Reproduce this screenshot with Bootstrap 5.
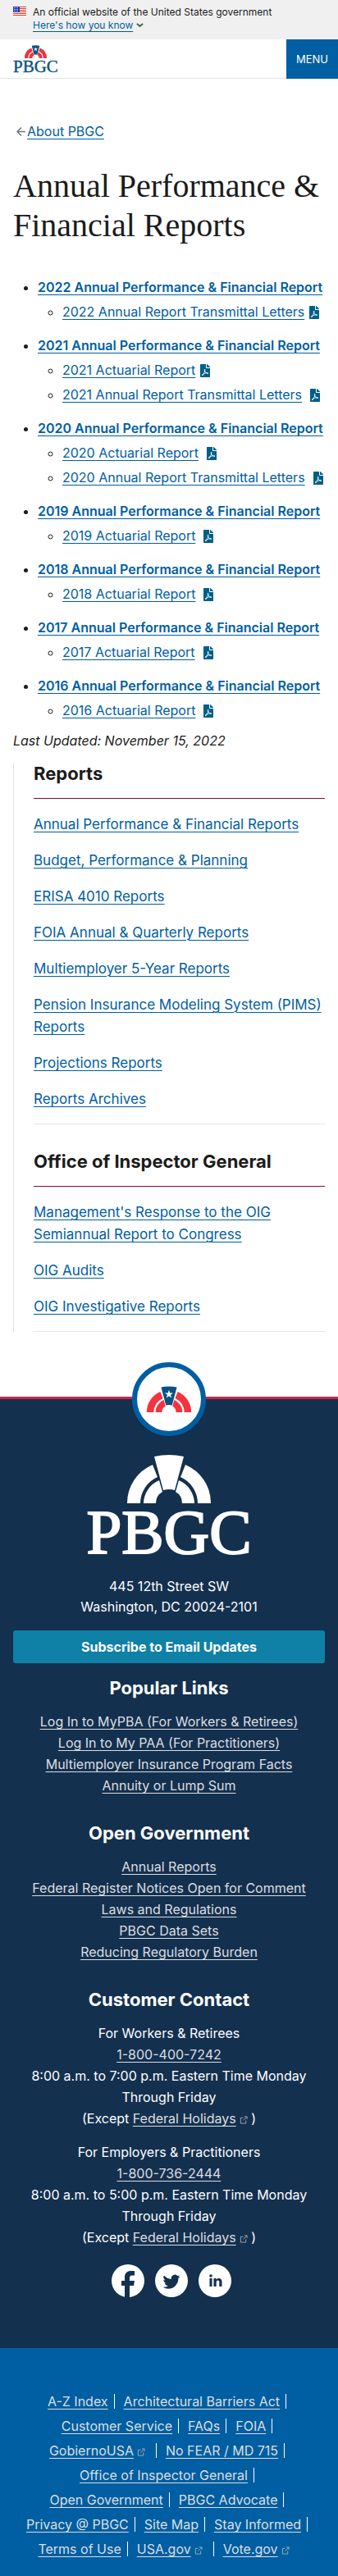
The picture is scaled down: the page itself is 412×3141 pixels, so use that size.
<!DOCTYPE html>
<html lang="en">
<head>
<meta charset="utf-8">
<meta name="viewport" content="width=device-width, initial-scale=1">
<title>Annual Performance &amp; Financial Reports | PBGC</title>
<link href="https://cdn.jsdelivr.net/npm/bootstrap@5.3.0/dist/css/bootstrap.min.css" rel="stylesheet">
<style>
:root{--blue:#005ea2;--navy:#14304f;--ink:#1b1b1b}
body{font-family:Inter,"Liberation Sans",sans-serif;font-size:16px;line-height:25px;color:var(--ink)}
a{color:var(--blue);text-underline-offset:3px;text-decoration-thickness:1px}
.gov-banner{background:#f0f0f0;font-size:12px;line-height:16px;padding:7px 16px 9px}
.gov-banner .btn{font-size:12px;line-height:16px;color:var(--blue);text-underline-offset:3px}
.flag{margin-top:1px}
.site-header{height:48px;border-bottom:1px solid #dfe1e2}
.menu-btn{background:var(--blue);color:#fff;height:48px;width:63px;font-size:13px}
.back{padding-top:52px}
h1{font-family:"Liberation Serif",serif;font-size:40px;line-height:48px;font-weight:400;margin:30px 0 39px}
.reports{padding-left:30px;margin-bottom:12px}
.reports li{margin-bottom:5px}
.reports > li > a{font-weight:600}
.reports ul{padding-left:30px;margin:5px 0 16px}
.reports > li:last-child,.reports > li:last-child ul{margin-bottom:0}
.reports > li:last-child li{margin-bottom:0}
.pdf{width:12px;height:16px;fill:#005f87;margin-left:6px;vertical-align:-3px}
.pdf-far{margin-left:10px}
.updated{margin-bottom:14px}
.side{border-left:1px solid #dfe1e2;padding-left:24px}
.side h2{font-size:22px;line-height:27px;font-weight:700;margin:0;padding-bottom:16px;border-bottom:1px solid #8b0a2f}
.side ul{padding:9px 0 8px;border-bottom:1px solid #e6e7e8;font-size:17px;line-height:27px}
.side li{padding:9px 0 8px}
.side section + section{padding-top:32px}
.seal-row{padding-top:37px}
.seal{width:90px;height:90px;border:6px solid var(--blue);background:#fff;margin:0 auto -48px;position:relative;z-index:1}
.foot{background:var(--navy);border-top:3px solid #c7254e;color:#fff;line-height:26px;padding:66px 16px 62px}
.foot a,.legal a{color:#dcdee0}
.foot h2{font-size:22px;line-height:28px;font-weight:700;margin:0 0 14px}
.foot .links{margin-bottom:31px}
.foot p{margin-bottom:15px}
.foot address{line-height:25px;margin-bottom:16px}
.foot-logo{overflow:visible;margin-bottom:24px}
.subscribe{background:#0f80a6;color:#fff;font-weight:700;height:40px;border-radius:3px;margin-bottom:16px}
.social{gap:13px;padding:5px 0 0 6px}
.social a{width:40px;height:40px}
.social svg{display:block}
.ext{width:10px;height:10px;fill:none;stroke:#a9aeb1;stroke-width:1;margin-left:4px;vertical-align:-1px}
.legal{background:var(--blue);padding:50px 24px 20px}
.legal li{margin:3px 8px 3px 0;padding:0 8px 0 3px;height:24px;line-height:24px}
.legal li:not(:last-child){background:linear-gradient(#fff,#fff) right 3px/1px 18px no-repeat}
.legal .outside{padding-right:14px}
</style>
</head>
<body>
<svg width="0" height="0" class="position-absolute" aria-hidden="true">
  <symbol id="arcs" viewBox="-52 -60 104 60">
    <path d="M-51 0A51 51 0 0 1-20-47L-14-32A35 35 0 0 0-35 0ZM-31 0A31 31 0 0 1-12-28L-8-14A16 16 0 0 0-16 0ZM51 0A51 51 0 0 0 20-47L14-32A35 35 0 0 1 35 0ZM31 0A31 31 0 0 0 12-28L8-14A16 16 0 0 1 16 0Z"/>
  </symbol>
  <symbol id="keystone" viewBox="-52 -60 104 60"><path d="M-18-57Q0-61 18-57L7-16Q0-18-7-16Z"/></symbol>
  <symbol id="star" viewBox="-52 -60 104 60"><path d="M0-51L2.300-44.200H9.500L3.700-40L5.900-33L0-37.200L-5.900-33L-3.700-40L-9.500-44.200H-2.300Z"/></symbol>
  <symbol id="pdf" viewBox="0 0 384 512"><path d="M181.900 256.100c-5-16-4.900-46.900-2-46.900 8.400 0 7.600 36.900 2 46.900zm-1.700 47.200c-7.700 20.200-17.300 43.300-28.400 62.700 18.300-7 39-17.200 62.900-21.900-12.700-9.600-24.900-23.400-34.500-40.800zM86.100 428.100c0 .8 13.200-5.400 34.900-40.200-6.700 6.300-29.100 24.500-34.900 40.200zM248 160h136v328c0 13.300-10.700 24-24 24H24c-13.300 0-24-10.700-24-24V24C0 10.700 10.700 0 24 0h200v136c0 13.200 10.800 24 24 24zm-8 171.800c-20-12.200-33.300-29-42.700-53.800 4.500-18.500 11.600-46.600 6.200-64.200-4.700-29.400-42.400-26.500-47.800-6.800-5 18.300-.4 44.100 8.100 77-11.600 27.600-28.700 64.600-40.800 85.800-.1 0-.1.1-.2.1-27.100 13.900-73.600 44.500-54.500 68 5.600 6.900 16 10 21.500 10 17.900 0 35.700-18 61.100-61.800 25.800-8.500 54.100-19.100 79-23.200 21.700 11.800 47.100 19.500 64 19.500 29.200 0 31.200-32 19.700-43.400-13.900-13.600-54.300-9.700-73.600-7.200zM377 105L279 7c-4.500-4.500-10.600-7-17-7h-6v128h128v-6.100c0-6.300-2.500-12.400-7-16.900zm-74.100 255.300c4.100-2.700-2.500-11.900-42.800-9 37.100 15.800 42.800 9 42.800 9z"/></symbol>
  <symbol id="ext" viewBox="0 0 11 11"><path d="M5 2.500H1.500V10H8.500V6M6.500 1H10V4.500M10 1L5 6"/></symbol>
</svg>

<div class="gov-banner d-flex">
  <svg class="flag me-2 flex-shrink-0" width="16" height="11" viewBox="0 0 16 11" aria-hidden="true"><path fill="#fff" d="M0 0h16v11H0z"/><path stroke="#db3e1f" d="M0 .5h16M0 2.500h16M0 4.500h16M0 6.500h16M0 8.500h16M0 10.500h16"/><path fill="#1e33b1" d="M0 0h8v7H0z"/><path stroke="#fff" stroke-dasharray="1 1" d="M1 1.500h6M1 3.500h6M1 5.500h6"/></svg>
  <div>
    <div>An official website of the United States government</div>
    <button type="button" class="btn p-0 border-0 d-flex align-items-center"><span class="text-decoration-underline">Here's how you know</span><svg class="ms-1" width="9" height="6" viewBox="0 0 9 6" fill="none" stroke="#356a52" stroke-width="2" aria-hidden="true"><path d="M1 1L4.500 4L8 1"/></svg></button>
  </div>
</div>
<header class="site-header d-flex justify-content-between">
  <a href="#" class="ms-3 mt-1" aria-label="PBGC home">
    <svg width="56" height="40" viewBox="0 0 56 40"><use href="#arcs" x="13" y="3" width="29" height="16" fill="#f0323c"/><use href="#keystone" x="13" y="3" width="29" height="16" fill="#0b5283"/><use href="#star" x="13" y="3" width="29" height="16" fill="#fff"/><text x="0" y="36" font-family="Liberation Serif" font-size="21" fill="#0b5283" stroke="#0b5283" stroke-width=".4">PBGC</text></svg>
  </a>
  <button type="button" class="menu-btn border-0">MENU</button>
</header>

<main class="px-3">
  <nav class="back d-flex align-items-center"><svg class="ms-1" width="13" height="11" viewBox="0 0 13 11" fill="none" stroke="#71767a" stroke-width="1.500" aria-hidden="true"><path d="M11 5.500H1M6 .5L1 5.500L6 10.500"/></svg><a href="#">About PBGC</a></nav>
  <h1>Annual Performance &amp; Financial Reports</h1>
  <ul class="reports">
    <li><a href="#">2022 Annual Performance &amp; Financial Report</a><ul><li><a href="#">2022 Annual Report Transmittal Letters</a><svg class="pdf"><use href="#pdf"/></svg></li></ul></li>
    <li><a href="#">2021 Annual Performance &amp; Financial Report</a><ul><li><a href="#">2021 Actuarial Report</a><svg class="pdf"><use href="#pdf"/></svg></li><li><a href="#">2021 Annual Report Transmittal Letters</a><svg class="pdf pdf-far"><use href="#pdf"/></svg></li></ul></li>
    <li><a href="#">2020 Annual Performance &amp; Financial Report</a><ul><li><a href="#">2020 Actuarial Report</a><svg class="pdf pdf-far"><use href="#pdf"/></svg></li><li><a href="#">2020 Annual Report Transmittal Letters</a><svg class="pdf pdf-far"><use href="#pdf"/></svg></li></ul></li>
    <li><a href="#">2019 Annual Performance &amp; Financial Report</a><ul><li><a href="#">2019 Actuarial Report</a><svg class="pdf pdf-far"><use href="#pdf"/></svg></li></ul></li>
    <li><a href="#">2018 Annual Performance &amp; Financial Report</a><ul><li><a href="#">2018 Actuarial Report</a><svg class="pdf pdf-far"><use href="#pdf"/></svg></li></ul></li>
    <li><a href="#">2017 Annual Performance &amp; Financial Report</a><ul><li><a href="#">2017 Actuarial Report</a><svg class="pdf pdf-far"><use href="#pdf"/></svg></li></ul></li>
    <li><a href="#">2016 Annual Performance &amp; Financial Report</a><ul><li><a href="#">2016 Actuarial Report</a><svg class="pdf pdf-far"><use href="#pdf"/></svg></li></ul></li>
  </ul>
  <p class="updated fst-italic">Last Updated: November 15, 2022</p>
  <aside class="side">
    <section>
      <h2>Reports</h2>
      <ul class="list-unstyled mb-0">
        <li><a href="#">Annual Performance &amp; Financial Reports</a></li>
        <li><a href="#">Budget, Performance &amp; Planning</a></li>
        <li><a href="#">ERISA 4010 Reports</a></li>
        <li><a href="#">FOIA Annual &amp; Quarterly Reports</a></li>
        <li><a href="#">Multiemployer 5-Year Reports</a></li>
        <li><a href="#">Pension Insurance Modeling System (PIMS) Reports</a></li>
        <li><a href="#">Projections Reports</a></li>
        <li><a href="#">Reports Archives</a></li>
      </ul>
    </section>
    <section>
      <h2>Office of Inspector General</h2>
      <ul class="list-unstyled mb-0">
        <li><a href="#">Management's Response to the OIG Semiannual Report to Congress</a></li>
        <li><a href="#">OIG Audits</a></li>
        <li><a href="#">OIG Investigative Reports</a></li>
      </ul>
    </section>
  </aside>
</main>

<footer class="text-center">
  <div class="seal-row">
    <div class="seal rounded-circle d-flex align-items-center justify-content-center"><svg width="56" height="32" aria-hidden="true"><use href="#arcs" fill="#f5333f"/><use href="#keystone" fill="#0b5283"/><use href="#star" fill="#fff"/></svg></div>
  </div>
  <div class="foot">
    <svg width="204" height="126" viewBox="0 0 204 126" role="img" aria-label="PBGC" class="foot-logo d-block mx-auto" fill="#fff"><use href="#arcs" x="50" y="1" width="104" height="60"/><use href="#keystone" x="50" y="1" width="104" height="60"/><text x="102" y="122" text-anchor="middle" font-family="Liberation Serif" font-size="77" stroke="#fff" stroke-width="2">PBGC</text></svg>
    <address>445 12th Street SW<br>Washington, DC 20024-2101</address>
    <button type="button" class="subscribe border-0 w-100">Subscribe to Email Updates</button>
    <h2>Popular Links</h2>
    <ul class="links list-unstyled">
      <li><a href="#">Log In to MyPBA (For Workers &amp; Retirees)</a></li>
      <li><a href="#">Log In to My PAA (For Practitioners)</a></li>
      <li><a href="#">Multiemployer Insurance Program Facts</a></li>
      <li><a href="#">Annuity or Lump Sum</a></li>
    </ul>
    <h2>Open Government</h2>
    <ul class="links list-unstyled">
      <li><a href="#">Annual Reports</a></li>
      <li><a href="#">Federal Register Notices Open for Comment</a></li>
      <li><a href="#">Laws and Regulations</a></li>
      <li><a href="#">PBGC Data Sets</a></li>
      <li><a href="#">Reducing Regulatory Burden</a></li>
    </ul>
    <h2>Customer Contact</h2>
    <p>For Workers &amp; Retirees<br><a href="#">1-800-400-7242</a><br>8:00 a.m. to 7:00 p.m. Eastern Time Monday Through Friday<br>(Except <a href="#">Federal Holidays</a><svg class="ext"><use href="#ext"/></svg> )</p>
    <p>For Employers &amp; Practitioners<br><a href="#">1-800-736-2444</a><br>8:00 a.m. to 5:00 p.m. Eastern Time Monday Through Friday<br>(Except <a href="#">Federal Holidays</a><svg class="ext"><use href="#ext"/></svg> )</p>
    <div class="social d-flex justify-content-center">
      <a href="#" aria-label="Facebook"><svg width="40" height="40" viewBox="0 0 40 40"><circle cx="20" cy="20" r="20" fill="#fff"/><path fill="#14304f" d="M16 40V26H12V20H16V16C16 10.500 19 8 24 8H28V13.500H25C23 13.500 22 14.500 22 16.500V20H28L27 26H22V40Z"/></svg></a>
      <a href="#" aria-label="Twitter"><svg width="40" height="40" viewBox="0 0 40 40"><circle cx="20" cy="20" r="20" fill="#fff"/><svg x="9.500" y="10" width="21" height="21" viewBox="0 0 16 16" fill="#14304f"><path d="M5.026 15c6.038 0 9.341-5.003 9.341-9.334 0-.14 0-.282-.006-.422A6.685 6.685 0 0 0 16 3.542a6.658 6.658 0 0 1-1.889.518 3.301 3.301 0 0 0 1.447-1.817 6.533 6.533 0 0 1-2.087.793A3.286 3.286 0 0 0 7.875 6.030a9.325 9.325 0 0 1-6.767-3.429 3.289 3.289 0 0 0 1.018 4.382A3.323 3.323 0 0 1 .64 6.575v.045a3.288 3.288 0 0 0 2.632 3.218 3.203 3.203 0 0 1-.865.115 3.230 3.230 0 0 1-.614-.057 3.283 3.283 0 0 0 3.067 2.277A6.588 6.588 0 0 1 .78 13.580a6.320 6.320 0 0 1-.78-.045A9.344 9.344 0 0 0 5.026 15z"/></svg></svg></a>
      <a href="#" aria-label="LinkedIn"><svg width="40" height="40" viewBox="0 0 40 40"><circle cx="20" cy="20" r="20" fill="#fff"/><path fill="#14304f" d="M13.500 17H16.500V27H13.500ZM18.500 17H21.500V18.500C23 16.200 28.500 15.800 28.500 21V27H25.300V21.800C25.300 18.500 21.700 18.700 21.700 21.800V27H18.500Z"/><circle cx="15" cy="14" r="1.800" fill="#14304f"/></svg></a>
    </div>
  </div>
  <nav class="legal">
    <ul class="list-unstyled d-flex flex-wrap justify-content-center mb-0">
      <li><a href="#">A-Z Index</a></li>
      <li><a href="#">Architectural Barriers Act</a></li>
      <li><a href="#">Customer Service</a></li>
      <li><a href="#">FAQs</a></li>
      <li><a href="#">FOIA</a></li>
      <li class="outside"><a href="#">GobiernoUSA</a><svg class="ext"><use href="#ext"/></svg></li>
      <li><a href="#">No FEAR / MD 715</a></li>
      <li><a href="#">Office of Inspector General</a></li>
      <li><a href="#">Open Government</a></li>
      <li><a href="#">PBGC Advocate</a></li>
      <li><a href="#">Privacy @ PBGC</a></li>
      <li><a href="#">Site Map</a></li>
      <li><a href="#">Stay Informed</a></li>
      <li><a href="#">Terms of Use</a></li>
      <li class="outside"><a href="#">USA.gov</a><svg class="ext"><use href="#ext"/></svg></li>
      <li><a href="#">Vote.gov</a><svg class="ext"><use href="#ext"/></svg></li>
    </ul>
  </nav>
</footer>
<script src="https://cdn.jsdelivr.net/npm/bootstrap@5.3.0/dist/js/bootstrap.bundle.min.js"></script>
</body>
</html>
